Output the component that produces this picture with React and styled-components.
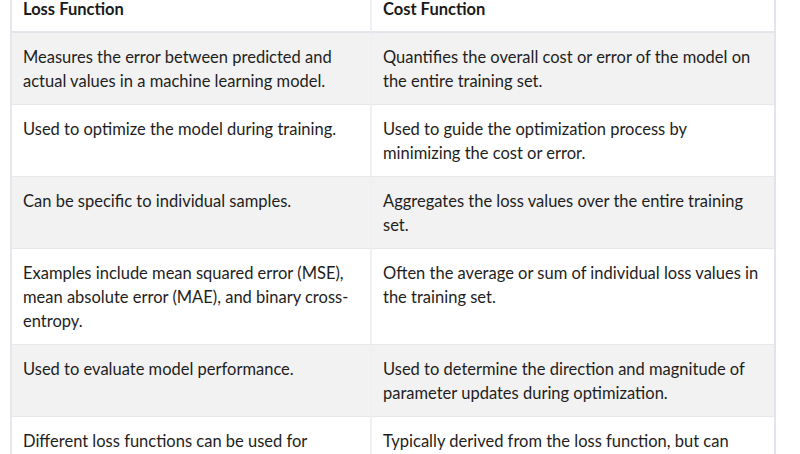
import styled, { createGlobalStyle } from "styled-components";

const GlobalStyle = createGlobalStyle`
    html, body {
        margin: 0;
        padding: 0;
        background: #fff;
        overflow: hidden;
    }
    body {
        font-family: Lato, "Open Sans", sans-serif;
        color: #222;
    }
`;

const rows = [
    [
        "Measures the error between predicted and actual values in a machine learning model.",
        "Quantifies the overall cost or error of the model on the entire training set."
    ],
    [
        "Used to optimize the model during training.",
        "Used to guide the optimization process by minimizing the cost or error."
    ],
    [
        "Can be specific to individual samples.",
        "Aggregates the loss values over the entire training set."
    ],
    [
        "Examples include mean squared error (MSE), mean absolute error (MAE), and binary cross-entropy.",
        "Often the average or sum of individual loss values in the training set."
    ],
    [
        "Used to evaluate model performance.",
        "Used to determine the direction and magnitude of parameter updates during optimization."
    ],
    [
        "Different loss functions can be used for different tasks and problem domains.",
        "Typically derived from the loss function, but can include additional regularization terms."
    ]
];

const App = () => {
    return (
        <>
            <GlobalStyle />
            <PageDiv>
                <CompareTable>
                    <colgroup>
                        <col style={{ width: 360 }} />
                        <col style={{ width: 402 }} />
                    </colgroup>
                    <thead>
                        <tr>
                            <HeadCell>Loss Function</HeadCell>
                            <HeadCell $last>Cost Function</HeadCell>
                        </tr>
                    </thead>
                    <tbody>
                        {rows.map((r, i) => (
                            <BodyRow key={i} $striped={i % 2 === 0}>
                                <BodyCell>{r[0]}</BodyCell>
                                <BodyCell $last>{r[1]}</BodyCell>
                            </BodyRow>
                        ))}
                    </tbody>
                </CompareTable>
            </PageDiv>
        </>
    );
};

export default App;

const PageDiv = styled.div`
    width: 800px;
    height: 454px;
    overflow: hidden;
    padding-left: 10px;
    box-sizing: border-box;
`;

const CompareTable = styled.table`
    width: 766px;
    margin-top: -15px;
    table-layout: fixed;
    border-collapse: separate;
    border-spacing: 0;
    border-left: 2px solid #e4e7eb;
    border-right: 2px solid #e1e5eb;
`;

const HeadCell = styled.th`
    text-align: left;
    font-weight: 700;
    font-size: 16.5px;
    line-height: 24px;
    padding: 12px 11px 10px 11px;
    color: #1a1a1a;
    border-bottom: 2px solid #e2e5e9;
    border-right: ${(p) => (p.$last ? "none" : "2px solid #eef0f2")};
`;

const BodyRow = styled.tr`
    background: ${(p) => (p.$striped ? "#f2f2f2" : "#fff")};
`;

const BodyCell = styled.td`
    vertical-align: top;
    font-size: 16.5px;
    line-height: 24px;
    padding: 12px 11px 11px 11px;
    color: #1e1e1e;
    border-bottom: 1px solid #e6e8eb;
    border-right: ${(p) => (p.$last ? "none" : "2px solid #eef0f2")};
`;
